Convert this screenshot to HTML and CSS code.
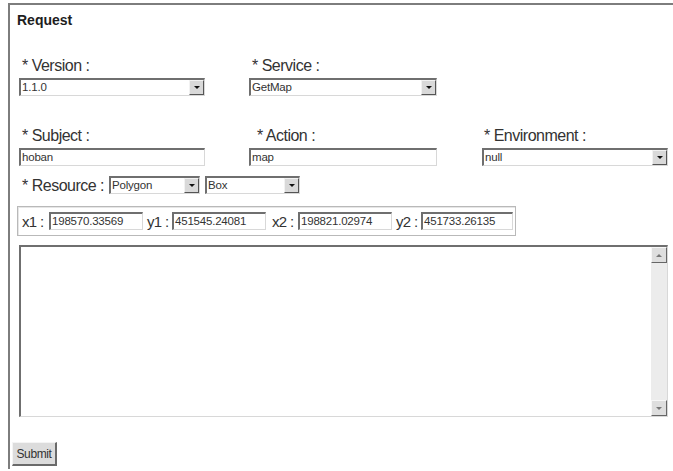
FILE: index.html
```html
<!DOCTYPE html>
<html>
<head>
<meta charset="utf-8">
<link rel="stylesheet" href="styles.css">
</head>
<body>
<div class="frame">
  <h1 class="title">Request</h1>
  <form class="request">
    <div class="row row-top">
      <div class="field">
        <label class="label">* Version :</label>
        <div class="select w-wide"><span class="value">1.1.0</span><span class="drop"></span></div>
      </div>
      <div class="field">
        <label class="label">* Service :</label>
        <div class="select w-service"><span class="value">GetMap</span><span class="drop"></span></div>
      </div>
    </div>
    <div class="row row-mid">
      <div class="field">
        <label class="label">* Subject :</label>
        <div class="input w-wide"><span class="value">hoban</span></div>
      </div>
      <div class="field field-action">
        <label class="label">* Action :</label>
        <div class="input w-service"><span class="value">map</span></div>
      </div>
      <div class="field field-env">
        <label class="label">* Environment :</label>
        <div class="select w-env"><span class="value">null</span><span class="drop"></span></div>
      </div>
    </div>
    <div class="resource">
      <label class="label">* Resource :</label>
      <div class="select w-poly"><span class="value">Polygon</span><span class="drop"></span></div>
      <div class="select w-box"><span class="value">Box</span><span class="drop"></span></div>
    </div>
    <div class="coords">
      <label class="label c-x1">x1 :</label>
      <div class="input w-coord"><span class="value">198570.33569</span></div>
      <label class="label c-y1">y1 :</label>
      <div class="input w-coord"><span class="value">451545.24081</span></div>
      <label class="label c-x2">x2 :</label>
      <div class="input w-coord"><span class="value">198821.02974</span></div>
      <label class="label c-y2">y2 :</label>
      <div class="input w-coord w-last"><span class="value">451733.26135</span></div>
    </div>
    <div class="textarea">
      <div class="text-body"></div>
      <div class="scrollbar">
        <span class="sb-btn sb-up"></span>
        <span class="sb-track"></span>
        <span class="sb-btn sb-down"></span>
      </div>
    </div>
    <div class="actions">
      <button type="button" class="submit">Submit</button>
    </div>
  </form>
</div>
</body>
</html>
```

FILE: styles.css
```css
html, body {
  margin: 0;
  padding: 0;
  background: #fff;
  font-family: "Liberation Sans", Arial, sans-serif;
  color: #2a2a2a;
}

.frame {
  margin: 3px 0 0 8px;
  height: 466px;
  border-top: 2px solid #7d7d7d;
  border-left: 2px solid #7d7d7d;
  box-sizing: border-box;
}

.title {
  margin: 7px 0 0 7px;
  font-size: 14px;
  line-height: 16px;
  font-weight: bold;
  color: #1e1e1e;
}

.request {
  padding-left: 9px;
}

.label {
  font-size: 16px;
  line-height: 17px;
  color: #333;
  letter-spacing: -0.5px;
  white-space: nowrap;
}

.row {
  display: flex;
}

.row-top {
  margin-top: 29px;
}

.row-mid {
  margin-top: 31px;
}

.field {
  display: flex;
  flex-direction: column;
  flex-shrink: 0;
  gap: 4px;
  width: 230px;
}

.field .label {
  padding-left: 3px;
}

.field-action {
  width: 233px;
}

.field-action .label {
  padding-left: 8px;
}

.field-env {
  width: 186px;
}

.field-env .label {
  padding-left: 2px;
}

/* sunken win-classic controls */
.input, .select {
  position: relative;
  flex-shrink: 0;
  height: 18px;
  box-sizing: border-box;
  border-top: 2px solid #6f6f6f;
  border-left: 2px solid #6f6f6f;
  border-right: 1px solid #d8d8d8;
  border-bottom: 1px solid #d8d8d8;
  background: #fff;
  font-size: 11.5px;
  line-height: 15px;
  color: #333;
  overflow: hidden;
}

.value {
  padding-left: 1px;
  white-space: nowrap;
  letter-spacing: -0.2px;
}

.drop {
  position: absolute;
  top: 0;
  right: 0;
  width: 15px;
  height: 15px;
  box-sizing: border-box;
  background: #d9d9d9;
  border-top: 1px solid #f2f2f2;
  border-left: 1px solid #f2f2f2;
  border-right: 1px solid #555;
  border-bottom: 1px solid #555;
}

.drop::after {
  content: "";
  position: absolute;
  left: 4px;
  top: 5px;
  border-left: 3px solid transparent;
  border-right: 3px solid transparent;
  border-top: 3px solid #111;
}

.w-wide { width: 186px; }
.w-service { width: 188px; }
.w-env { width: 186px; }
.w-poly { width: 91px; }
.w-box { width: 95px; }
.w-coord { width: 94px; }
.w-coord.w-last { width: 92px; }

.resource {
  display: flex;
  align-items: center;
  margin-top: 10px;
}

.resource .label {
  width: 87px;
  padding-left: 3px;
}

.resource .w-poly {
  margin-right: 5px;
}

.coords {
  display: flex;
  align-items: center;
  width: 499px;
  height: 30px;
  margin: 12px 0 0 -2px;
  padding: 0 3px;
  box-sizing: border-box;
  border: 1px solid #b9b9b9;
  box-shadow: inset 1px 1px 0 #e6e6e6;
}

.coords .label {
  flex-shrink: 0;
  font-size: 15px;
  letter-spacing: -0.7px;
}

.c-x1 { width: 26px; margin: 0 1px 0 1px; }
.c-y1 { width: 25px; margin-left: 4px; }
.c-x2 { width: 26px; margin-left: 6px; }
.c-y2 { width: 25px; margin-left: 4px; }

.textarea {
  display: flex;
  width: 649px;
  height: 172px;
  margin-top: 9px;
  box-sizing: border-box;
  border-top: 2px solid #6f6f6f;
  border-left: 2px solid #6f6f6f;
  border-right: 1px solid #d8d8d8;
  border-bottom: 1px solid #d8d8d8;
}

.text-body {
  flex: 1;
}

.scrollbar {
  display: flex;
  flex-direction: column;
  width: 16px;
  background: #ececec;
}

.sb-track {
  flex: 1;
}

.sb-btn {
  position: relative;
  height: 16px;
  box-sizing: border-box;
  background: #dedede;
  border-top: 1px solid #f7f7f7;
  border-left: 1px solid #f7f7f7;
  border-right: 1px solid #666;
  border-bottom: 1px solid #666;
}

.sb-btn::after {
  content: "";
  position: absolute;
  left: 4px;
  top: 6px;
  border-left: 3px solid transparent;
  border-right: 3px solid transparent;
}

.sb-up::after {
  border-bottom: 3px solid #777;
}

.sb-down::after {
  border-top: 3px solid #777;
}

.actions {
  margin-top: 25px;
  margin-left: -7px;
}

.submit {
  width: 45px;
  height: 24px;
  padding: 0;
  font-family: "Liberation Sans", Arial, sans-serif;
  font-size: 12px;
  letter-spacing: -0.4px;
  color: #333;
  background: #dcdcdc;
  border-top: 1px solid #f4f4f4;
  border-left: 1px solid #f4f4f4;
  border-right: 2px solid #6a6a6a;
  border-bottom: 2px solid #6a6a6a;
}
```
